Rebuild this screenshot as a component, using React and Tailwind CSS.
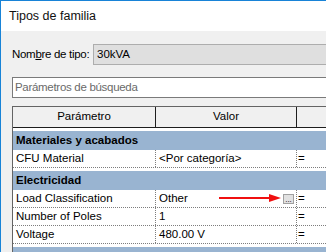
import React from 'react';

const font = { fontFamily: '"Liberation Sans", Arial, sans-serif' };

const GroupRow = ({ label }) => (
  <div className="pt-[3px] bg-white">
    <div className="h-[19px] bg-[#99b4d1] pl-[3px] flex items-center font-bold text-black">{label}</div>
  </div>
);

const DataRow = ({ name, value, children }) => (
  <div className="flex h-[18px] border-b border-dotted border-[#7d7d7d]">
    <div className="w-[143px] shrink-0 border-r border-dotted border-[#7d7d7d] pl-[3px] flex items-center">{name}</div>
    <div className="relative w-[141px] shrink-0 border-r border-dotted border-[#7d7d7d] pl-[3px] flex items-center">
      {value}
      {children}
    </div>
    <div className="flex-1 pl-[1px] flex items-center">=</div>
  </div>
);

const Arrow = () => (
  <svg className="absolute left-[63px] top-[3px]" width="62" height="10" viewBox="0 0 62 10">
    <line x1="0" y1="5" x2="52" y2="5" stroke="#f01010" strokeWidth="2" />
    <polygon points="50,1 62,5 50,9" fill="#f01010" />
  </svg>
);

const App = () => {
  return (
    <div
      className="w-[326px] h-[252px] overflow-hidden border-l border-t border-[#1883d7] bg-[#f0f0f0] text-[11.5px] text-black"
      style={font}
    >
      <div className="h-[30px] bg-white pl-[8px] flex items-center text-[12.5px] text-[#111]">Tipos de familia</div>

      <div className="pl-[11px] pt-[13px]">
        <div className="flex items-center h-[21px]">
          <div className="w-[81px] shrink-0 tracking-[-0.3px]">
            Nom<span className="underline">b</span>re de tipo:
          </div>
          <div className="flex-1 h-full bg-[#dfdfdf] border border-r-0 border-[#adadad] pl-[3px] flex items-center">30kVA</div>
        </div>

        <div className="mt-[12px] h-[21px] bg-white border border-r-0 border-[#7a7a7a] pl-[2px] flex items-center text-[#6a6a6a] tracking-[-0.3px]">
          Parámetros de búsqueda
        </div>

        <div className="mt-[8px] border-l border-t border-[#646464] bg-white">
          <div className="flex h-[21px] bg-[#f0f0f0] border-b border-[#1e1e1e]">
            <div className="w-[143px] shrink-0 border-r border-[#1e1e1e] flex items-center justify-center">Parámetro</div>
            <div className="w-[141px] shrink-0 border-r border-[#1e1e1e] flex items-center justify-center">Valor</div>
            <div className="flex-1" />
          </div>

          <GroupRow label="Materiales y acabados" />
          <DataRow name="CFU Material" value="<Por categoría>" />
          <GroupRow label="Electricidad" />
          <DataRow name="Load Classification" value="Other">
            <Arrow />
            <div className="ml-auto mr-[2px] w-[11px] h-[10px] bg-[#e1e1e1] border border-[#a0a0a0] flex items-end justify-center text-[8px] leading-[7px]">
              ...
            </div>
          </DataRow>
          <DataRow name="Number of Poles" value="1" />
          <DataRow name="Voltage" value="480.00 V" />
          <GroupRow label="" />
        </div>
      </div>
    </div>
  );
};

export default App;
